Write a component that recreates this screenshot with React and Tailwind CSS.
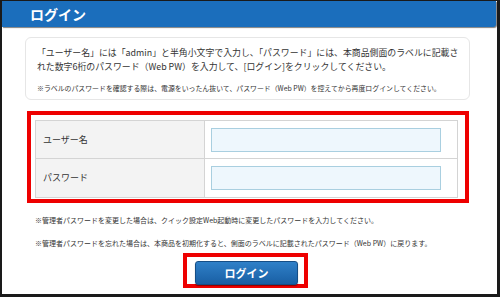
import React from 'react';

const jp = { fontFamily: '"Noto Sans CJK JP", "Noto Sans", sans-serif' };

const Row = ({ label, type, last }) => (
  <div className={`flex h-[38px] ${last ? '' : 'border-b border-[#d4d4d4]'}`}>
    <div className="w-[169px] shrink-0 bg-[#f3f3f3] border-r border-[#d4d4d4] flex items-center pl-[7px] text-[9px] text-[#333]">
      {label}
    </div>
    <div className="flex items-center pl-[6px]">
      <input
        type={type}
        className="w-[230px] h-[24px] border border-[#a9cfe0] bg-[#eef7fd] outline-none"
      />
    </div>
  </div>
);

export default function App() {
  return (
    <div
      style={jp}
      className="w-[500px] h-[297px] bg-white border-t border-l-2 border-r-[3px] border-b-[3px] border-[#1a1a1a] overflow-hidden"
    >
      <div className="h-[26px] w-[494px] bg-[#1b6ebc] rounded-br-[3px] shadow-[1px_1px_1px_rgba(0,0,0,0.5)] flex items-center pl-[28px]">
        <span className="text-white text-[14px] font-bold leading-none">ログイン</span>
      </div>

      <div className="ml-[23px] mt-[10px] w-[445px] h-[63px] border border-[#e6e6e6] rounded-md pl-[11px] pt-[8px] text-[#333]">
        <p className="text-[8.9px] leading-[14px] whitespace-nowrap">
          「ユーザー名」には「admin」と半角小文字で入力し、「パスワード」には、本商品側面のラベルに記載さ
          <br />
          れた数字6桁のパスワード（Web PW）を入力して、[ログイン]をクリックしてください。
        </p>
        <p className="mt-[9px] text-[6.9px] leading-[10px] whitespace-nowrap">
          ※ラベルのパスワードを確認する際は、電源をいったん抜いて、パスワード（Web PW）を控えてから再度ログインしてください。
        </p>
      </div>

      <div className="ml-[25px] mt-[11px] w-[442px] h-[92px] border-4 border-[#ee0000] pl-[4px] pt-[5px]">
        <div className="w-[423px] border border-[#d4d4d4]">
          <Row label="ユーザー名" type="text" />
          <Row label="パスワード" type="password" last />
        </div>
      </div>

      <p className="ml-[33px] mt-[11px] text-[7px] leading-[12px] text-[#333] whitespace-nowrap">
        ※管理者パスワードを変更した場合は、クイック設定Web起動時に変更したパスワードを入力してください。
      </p>
      <p className="ml-[33px] mt-[11px] text-[7px] leading-[12px] text-[#333] whitespace-nowrap">
        ※管理者パスワードを忘れた場合は、本商品を初期化すると、側面のラベルに記載されたパスワード（Web PW）に戻ります。
      </p>

      <div className="ml-[181px] mt-[4px] w-[125px] h-[35px] border-4 border-[#ee0000] pl-[8px] pt-[2px]">
        <button className="w-[103px] h-[24px] rounded-[3px] border border-[#154e86] bg-gradient-to-b from-[#2f80c8] to-[#195fa4] text-white text-[11px] font-bold shadow-[0_1px_1px_rgba(0,0,0,0.4)]">
          ログイン
        </button>
      </div>
    </div>
  );
}
